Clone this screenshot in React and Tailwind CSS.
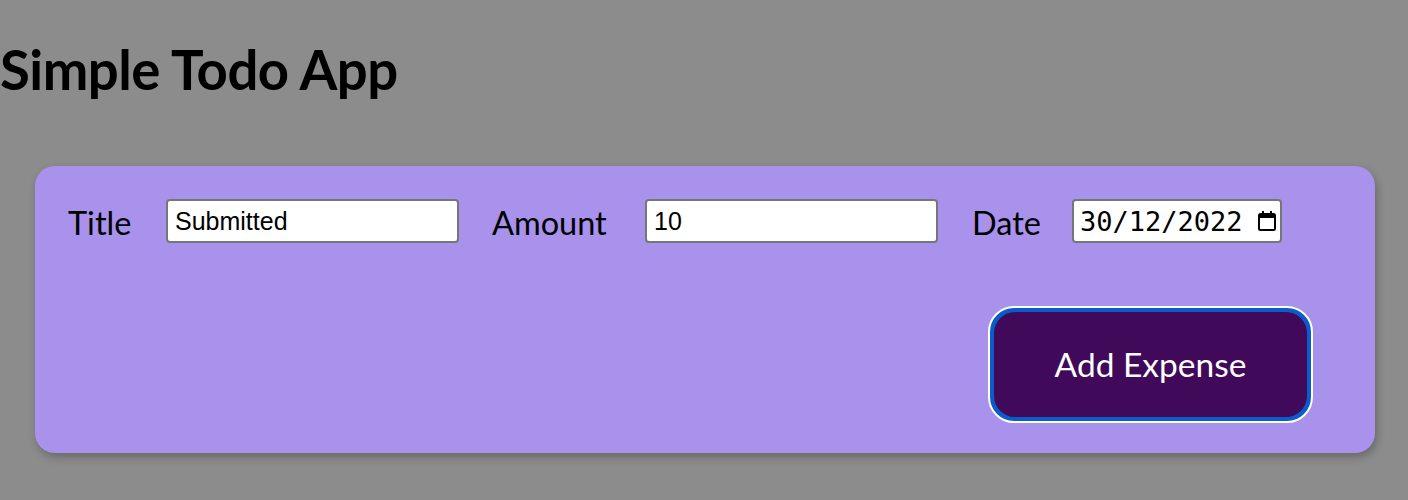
export default function App() {
  const sans = { fontFamily: "Lato, 'Noto Sans', sans-serif" };
  return (
    <div className="min-h-[500px] w-full bg-[#8c8c8c] overflow-hidden" style={sans}>
      <h1 className="m-0 pt-[36px] pl-0 text-[54.5px] font-bold leading-[66px] text-black tracking-[-0.5px]">
        Simple Todo App
      </h1>
      <div className="mt-[64px] ml-[35px] mr-[33px] h-[287px] rounded-[20px] bg-[#a892ec] shadow-[2px_4px_8px_rgba(0,0,0,0.25)] pt-[33px] pl-[33px] pr-[62px] flex flex-col">
        <div className="flex items-start">
          <label className="w-[98px] text-[32.5px] leading-[48px] text-black">Title</label>
          <input
            type="text"
            defaultValue="Submitted"
            className="w-[293px] h-[44px] bg-white border-2 border-[#767676] rounded-[4px] px-[7px] text-[25px] text-black outline-none"
            style={{ fontFamily: "'Liberation Sans', Arial, sans-serif" }}
          />
          <label className="ml-[33px] w-[153px] text-[32.5px] leading-[48px] text-black">Amount</label>
          <input
            type="text"
            defaultValue="10"
            className="w-[293px] h-[44px] bg-white border-2 border-[#767676] rounded-[4px] px-[7px] text-[25px] text-black outline-none"
            style={{ fontFamily: "'Liberation Sans', Arial, sans-serif" }}
          />
          <label className="ml-[34px] w-[100px] text-[32.5px] leading-[48px] text-black">Date</label>
          <div className="w-[210px] h-[44px] bg-white border-2 border-[#767676] rounded-[4px] pl-[6px] pr-[3px] flex items-center justify-between">
            <span className="text-[27px] text-black leading-none" style={{ fontFamily: "'DejaVu Sans Mono', 'Liberation Mono', monospace" }}>
              30/12/2022
            </span>
            <svg width="20" height="22" viewBox="0 0 20 22" className="shrink-0">
              <rect x="2" y="4" width="16" height="16" rx="1.5" fill="none" stroke="black" strokeWidth="2" />
              <rect x="2" y="4" width="16" height="4" fill="black" />
              <rect x="5" y="1" width="2" height="4" fill="black" />
              <rect x="13" y="1" width="2" height="4" fill="black" />
            </svg>
          </div>
        </div>
        <div className="flex justify-end mt-[59px]">
          <button className="w-[325px] h-[117px] rounded-[26px] border-2 border-white bg-[#0a5ccb] p-[4px]">
            <span className="flex w-full h-full items-center justify-center rounded-[21px] bg-[#40095a] text-white text-[33.5px]" style={sans}>
              Add Expense
            </span>
          </button>
        </div>
      </div>
    </div>
  );
}
